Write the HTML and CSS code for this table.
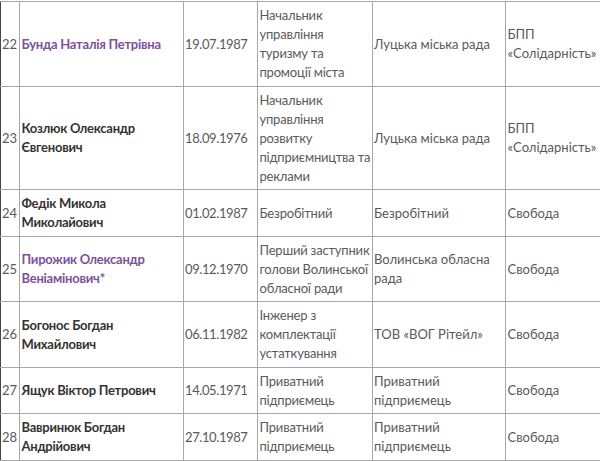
FILE: index.html
```html
<!DOCTYPE html>
<html lang="uk">
<head>
<meta charset="utf-8">
<link rel="stylesheet" href="styles.css">
</head>
<body>
<table class="list">
  <colgroup>
    <col class="c-num"><col class="c-name"><col class="c-date"><col class="c-job"><col class="c-org"><col class="c-party">
  </colgroup>
  <tbody>
    <tr>
      <td class="num">22</td>
      <td><a class="name link">Бунда Наталія Петрівна</a></td>
      <td class="date">19.07.1987</td>
      <td class="job">Начальник<br>управління<br>туризму та<br>промоції міста</td>
      <td>Луцька міська рада</td>
      <td>БПП<br>«Солідарність»</td>
    </tr>
    <tr>
      <td class="num">23</td>
      <td><span class="name">Козлюк Олександр<br>Євгенович</span></td>
      <td class="date">18.09.1976</td>
      <td class="job">Начальник<br>управління<br>розвитку<br>підприємництва та<br>реклами</td>
      <td>Луцька міська рада</td>
      <td>БПП<br>«Солідарність»</td>
    </tr>
    <tr>
      <td class="num">24</td>
      <td><span class="name">Федік Микола<br>Миколайович</span></td>
      <td class="date">01.02.1987</td>
      <td class="job">Безробітний</td>
      <td>Безробітний</td>
      <td>Свобода</td>
    </tr>
    <tr>
      <td class="num">25</td>
      <td><a class="name link">Пирожик Олександр<br>Веніамінович*</a></td>
      <td class="date">09.12.1970</td>
      <td class="job">Перший заступник<br>голови Волинської<br>обласної ради</td>
      <td>Волинська обласна<br>рада</td>
      <td>Свобода</td>
    </tr>
    <tr>
      <td class="num">26</td>
      <td><span class="name">Богонос Богдан<br>Михайлович</span></td>
      <td class="date">06.11.1982</td>
      <td class="job">Інженер з<br>комплектації<br>устаткування</td>
      <td>ТОВ «ВОГ Рітейл»</td>
      <td>Свобода</td>
    </tr>
    <tr>
      <td class="num">27</td>
      <td><span class="name">Ящук Віктор Петрович</span></td>
      <td class="date">14.05.1971</td>
      <td class="job">Приватний<br>підприємець</td>
      <td>Приватний<br>підприємець</td>
      <td>Свобода</td>
    </tr>
    <tr>
      <td class="num">28</td>
      <td><span class="name">Вавринюк Богдан<br>Андрійович</span></td>
      <td class="date">27.10.1987</td>
      <td class="job">Приватний<br>підприємець</td>
      <td>Приватний<br>підприємець</td>
      <td>Свобода</td>
    </tr>
  </tbody>
</table>
</body>
</html>
```
FILE: styles.css
```css
html, body {
  margin: 0;
  padding: 0;
  background: #fff;
}
body {
  font-family: Lato, "Open Sans", sans-serif;
  font-size: 13px;
  line-height: 19px;
  color: #5a5a5a;
}
.list {
  border-collapse: collapse;
  table-layout: fixed;
  width: 625px;
  margin-top: 1px;
  border-left: 1px solid #444;
}
.c-num { width: 19px; }
.c-name { width: 163.5px; }
.c-date { width: 74.5px; }
.c-job { width: 114.5px; }
.c-org { width: 133.5px; }
.c-party { width: 120px; }
.list td {
  border: 1px solid #a8a8a8;
  padding: 4px 0 3.5px 1.5px;
  vertical-align: middle;
  white-space: nowrap;
}
.list td.num {
  padding-left: 1px;
  border-left: 1px solid #444;
}
.list td.job {
  letter-spacing: -0.2px;
}
.date {
  letter-spacing: -0.4px;
}
.name {
  font-weight: bold;
  color: #333;
  letter-spacing: -0.25px;
}
.link {
  color: #7b519c;
  text-decoration: none;
}
```
